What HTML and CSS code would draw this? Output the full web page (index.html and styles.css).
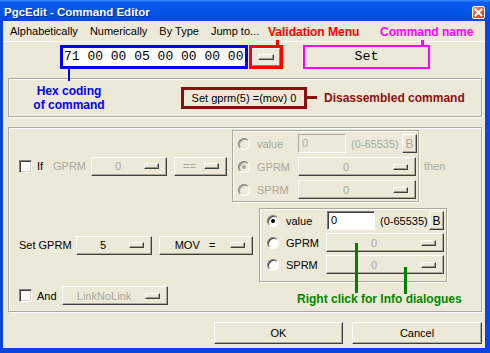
FILE: index.html
```html
<!DOCTYPE html>
<html lang="en">
<head>
    <meta charset="UTF-8">
    <title>PgcEdit - Command Editor</title>
    <link rel="stylesheet" href="styles.css">
</head>
<body>
<div class="window">
    <div class="titlebar">
        <span class="title">PgcEdit - Command Editor</span>
        <span class="close">
            <svg width="11" height="11" viewBox="0 0 11 11"><path d="M2.5 2.5 L8.5 8.5 M8.5 2.5 L2.5 8.5" stroke="#fff" stroke-width="2" stroke-linecap="square"/></svg>
        </span>
    </div>

    <div class="client">
        <div class="menubar">
            <span>Alphabetically</span>
            <span>Numerically</span>
            <span>By Type</span>
            <span>Jump to...</span>
        </div>

        <!-- hex code / validation / command name -->
        <div class="hexrow">
            <div class="hexbox"><span class="hextext">71 00 00 05 00 00 00 00</span></div>
            <div class="valbox">
                <span class="note red">Validation Menu</span>
                <div class="vbtn"><span class="drop"></span></div>
            </div>
            <div class="namebox">
                <span class="note magenta">Command name</span>
                Set
            </div>
        </div>

        <div class="group etched disgroup">
            <div class="note blue hexnote">Hex coding<br>of command</div>
            <div class="disbox">Set gprm(5) =(mov) 0</div>
            <span class="dislink"></span>
            <span class="note darkred">Disassembled command</span>
        </div>

        <div class="group etched maingroup">
            <!-- If row -->
            <div class="row row-if">
                <span class="check"></span>
                <span class="lbl lbl-if">If</span>
                <span class="lbl lbl-gprm off">GPRM</span>
                <div class="combo off w76"><span class="val">0</span><span class="drop"></span></div>
                <div class="combo off w53"><span class="val">==</span><span class="drop"></span></div>
                <div class="etched rbox rbox-if">
                    <div class="rrow">
                        <span class="radio off"></span><span class="rlabel off">value</span>
                        <span class="field off">0</span><span class="range off">(0-65535)</span>
                        <span class="bbtn off">B</span>
                    </div>
                    <div class="rrow">
                        <span class="radio off on"></span><span class="rlabel off">GPRM</span>
                        <div class="combo off wide"><span class="val">0</span><span class="drop"></span></div>
                    </div>
                    <div class="rrow">
                        <span class="radio off"></span><span class="rlabel off">SPRM</span>
                        <div class="combo off wide"><span class="val">0</span><span class="drop"></span></div>
                    </div>
                </div>
                <span class="lbl then off">then</span>
            </div>

            <!-- Set row -->
            <div class="row row-set">
                <span class="lbl lbl-set">Set GPRM</span>
                <div class="combo w76"><span class="val">5</span><span class="drop"></span></div>
                <div class="combo w94"><span class="val">MOV&nbsp;&nbsp;&nbsp;=</span><span class="drop"></span></div>
                <div class="etched rbox rbox-set">
                    <div class="rrow">
                        <span class="radio on"></span><span class="rlabel">value</span>
                        <span class="field">0</span><span class="range">(0-65535)</span>
                        <span class="bbtn">B</span>
                    </div>
                    <div class="rrow">
                        <span class="radio"></span><span class="rlabel">GPRM</span>
                        <div class="combo off wide pin-a"><span class="val">0</span><span class="drop"></span></div>
                    </div>
                    <div class="rrow">
                        <span class="radio"></span><span class="rlabel">SPRM</span>
                        <div class="combo off wide pin-b"><span class="val">0</span><span class="drop"></span></div>
                    </div>
                </div>
            </div>

            <!-- And row -->
            <div class="row row-and">
                <span class="check"></span>
                <span class="lbl lbl-and">And</span>
                <div class="combo off w106"><span class="val">LinkNoLink</span><span class="drop"></span></div>
                <span class="note green infonote">Right click for Info dialogues</span>
            </div>
        </div>

        <div class="buttons">
            <button class="btn ok">OK</button>
            <button class="btn cancel">Cancel</button>
        </div>
    </div>
</div>
</body>
</html>
```

FILE: styles.css
```css
* {
    box-sizing: border-box;
}

body {
    margin: 0;
    font-family: "Liberation Sans", Arial, sans-serif;
    font-size: 11px;
    color: #000;
}

.window {
    width: 490px;
    height: 353px;
    display: flex;
    flex-direction: column;
    background: #0b45d9; /* blue frame */
}

.titlebar {
    height: 21px;
    flex: none;
    display: flex;
    justify-content: space-between;
    align-items: flex-start;
    background: linear-gradient(#3d8fff 0, #0c5ff0 2px, #0457ea 7px, #0153e3 15px, #0048d4 21px);
}

.title {
    padding: 4px 0 0 4px;
    line-height: 17px;
    font-size: 11.5px;
    font-weight: bold;
    color: #fff;
    text-shadow: 1px 1px 0 #0a2a8c;
}

.close {
    width: 13px;
    height: 13px;
    margin: 6px 5px 0 0;
    border: 1px solid #fff;
    border-radius: 2px;
    background: linear-gradient(135deg, #f49a7c, #de5a32 50%, #c63c16);
    display: flex;
}

.client {
    flex: 1;
    margin: 0 5px 5px 3px;
    background: #ece9d8;
    display: flex;
    flex-direction: column;
}

.menubar {
    height: 21px;
    flex: none;
    display: flex;
    padding-left: 1px;
    line-height: 20px;
    border-bottom: 1px solid #fff;
}

.menubar span {
    padding: 0 6px;
}

/* annotation labels */
.note {
    font-family: "Liberation Sans", Arial, sans-serif;
    font-size: 12px;
    font-weight: bold;
    line-height: 14px;
    white-space: nowrap;
}

.red { color: #ff0000; }
.magenta { color: #ff00ff; }
.blue { color: #0000ff; }
.darkred { color: #8b0f0f; }
.green { color: #008800; }

/* hex row */
.hexrow {
    display: flex;
    height: 24px;
    margin-top: 3px;
    padding-left: 57px;
    flex: none;
}

.hexbox {
    position: relative;
    width: 188px;
    border: 3px solid #0000ff;
    background: #fff;
}

.hextext {
    display: block;
    padding-left: 1px;
    overflow: hidden;
    white-space: nowrap;
    font-family: "Liberation Mono", "Courier New", monospace;
    font-size: 13px;
    line-height: 18px;
}

.hexbox::after {
    content: "";
    position: absolute;
    left: 5px;
    top: calc(100% + 3px);
    width: 2px;
    height: 12px;
    background: #0000ff;
}

.valbox {
    position: relative;
    display: flex;
    width: 34px;
    margin-left: 1px;
    border: 3px solid #ff0000;
}

.valbox .note {
    position: absolute;
    left: 16px;
    bottom: calc(100% + 9px);
}

.valbox::before {
    content: "";
    position: absolute;
    left: 24px;
    top: -8px;
    width: 3px;
    height: 5px;
    background: #ff0000;
}

.vbtn {
    flex: 1;
    display: flex;
    align-items: center;
    justify-content: center;
    border: 1px solid;
    border-color: #fff #808080 #808080 #fff;
}

.vbtn .drop {
    width: 16px;
    margin: 0;
}

.namebox {
    position: relative;
    width: 127px;
    margin-left: 20px;
    border: 2px solid #ff00ff;
    text-align: center;
    font-family: "Liberation Mono", "Courier New", monospace;
    font-size: 13.33px;
    line-height: 20px;
}

.namebox .note {
    position: absolute;
    left: 75px;
    bottom: calc(100% + 8px);
}

.namebox::before {
    content: "";
    position: absolute;
    left: 116px;
    top: -7px;
    width: 3px;
    height: 5px;
    background: #ff00ff;
}

/* group boxes */
.etched {
    border: 1px solid #aca899;
    box-shadow: inset 1px 1px 0 #fff, 1px 1px 0 #fff;
}

.group {
    margin: 0 3px 0 5px;
    flex: none;
}

.disgroup {
    height: 39px;
    margin-top: 9px;
    display: flex;
    align-items: center;
}

.hexnote {
    width: 76px;
    margin-left: 22px;
    text-align: center;
}

.disbox {
    width: 126px;
    height: 22px;
    margin-left: 74px;
    border: 3px solid #8b0f0f;
    text-align: center;
    line-height: 16px;
}

.dislink {
    width: 10px;
    height: 3px;
    background: #8b0f0f;
}

.disgroup .darkred {
    margin-left: 7px;
}

.maingroup {
    margin-top: 10px;
    padding: 2px 0 6px 0;
}

.row {
    display: flex;
    align-items: center;
    padding-left: 10px;
}

.row-if {
    height: 72px;
}

.row-set {
    height: 74px;
    margin-top: 6px;
}

.row-and {
    height: 19px;
    margin-top: 4px;
}

.off {
    color: #aca899;
}

.lbl {
    flex: none;
    white-space: nowrap;
}

.lbl-if { width: 21px; padding-left: 5px; }
.lbl-gprm { width: 38px; }
.lbl-set { width: 57px; }
.lbl-and { width: 30px; padding-left: 5px; }
.then { margin-left: 5px; }

.check {
    flex: none;
    width: 13px;
    height: 13px;
    background: #fff;
    border: 1px solid;
    border-color: #808080 #fff #fff #808080;
    box-shadow: inset 1px 1px 0 #404040, inset -1px -1px 0 #d4d0c8;
}

/* combos drawn as raised buttons */
.combo {
    flex: none;
    position: relative;
    display: flex;
    align-items: center;
    height: 19px;
    border: 1px solid;
    border-color: #fff #404040 #404040 #fff;
    box-shadow: inset -1px -1px 0 #aca899;
    background: #ece9d8;
}

.combo .val {
    flex: 1;
    text-align: center;
    white-space: pre;
}

.drop {
    flex: none;
    width: 15px;
    height: 6px;
    margin-right: 7px;
    border: 1px solid;
    border-color: #fff #404040 #404040 #fff;
    box-shadow: inset -1px -1px 0 #9d9a8c;
    background: #ece9d8;
}

.w76 { width: 76px; }
.w53 { width: 53px; margin-left: 7px; }
.w94 { width: 94px; margin-left: 7px; }
.w106 { width: 106px; }
.wide { width: 118px; }

.rbox {
    flex: none;
    align-self: stretch;
    display: flex;
    flex-direction: column;
}

.rbox-if {
    width: 187px;
    margin-left: 5px;
    padding: 3px 1px 0 5px;
    gap: 4px;
}

.rbox-set {
    width: 188px;
    margin-left: 6px;
    padding: 2px 2px 0 7px;
    gap: 3px;
}

.rrow {
    display: flex;
    align-items: center;
    height: 19px;
}

.radio {
    flex: none;
    position: relative;
    width: 12px;
    height: 12px;
    border-radius: 50%;
    border: 1px solid;
    border-color: #808080 #fff #fff #808080;
    background: #fff;
    box-shadow: inset 1px 1px 0 #404040;
}

.radio.off {
    background: #ece9d8;
    box-shadow: inset 1px 1px 0 #9d9a8c;
}

.radio.on::after {
    content: "";
    position: absolute;
    left: 3px;
    top: 3px;
    width: 4px;
    height: 4px;
    border-radius: 50%;
    background: #000;
}

.radio.off.on::after {
    background: #aca899;
}

.rlabel {
    width: 41px;
    margin-left: 7px;
}

.field {
    width: 48px;
    height: 19px;
    padding-left: 3px;
    line-height: 17px;
    background: #fff;
    border: 1px solid;
    border-color: #808080 #fff #fff #808080;
    box-shadow: inset 1px 1px 0 #404040;
}

.field.off {
    background: #ece9d8;
    border-color: #aca899 #fff #fff #aca899;
    box-shadow: none;
}

.range {
    margin-left: 5px;
}

.bbtn {
    width: 15px;
    height: 19px;
    margin-left: auto;
    display: flex;
    align-items: center;
    justify-content: center;
    font-size: 12px;
    border: 1px solid;
    border-color: #fff #404040 #404040 #fff;
    box-shadow: inset -1px -1px 0 #aca899;
}

/* green pointers for the info note */
.pin-a::after,
.pin-b::after {
    content: "";
    position: absolute;
    z-index: 2;
    width: 3px;
    background: #008000;
}

.pin-a::after {
    left: 28px;
    top: 9px;
    height: 50px;
}

.pin-b::after {
    left: 77px;
    top: 11px;
    height: 27px;
}

.infonote {
    align-self: flex-end;
    margin: 0 0 -1px 129px;
}

.buttons {
    display: flex;
    justify-content: flex-end;
    gap: 9px;
    margin-top: 10px;
    padding-right: 3px;
}

.btn {
    height: 22px;
    padding: 0;
    font-family: "Liberation Sans", Arial, sans-serif;
    font-size: 11px;
    color: #000;
    background: #ece9d8;
    border: 1px solid;
    border-color: #fff #404040 #404040 #fff;
    box-shadow: inset -1px -1px 0 #aca899;
}

.ok { width: 129px; }
.cancel { width: 130px; }
```
